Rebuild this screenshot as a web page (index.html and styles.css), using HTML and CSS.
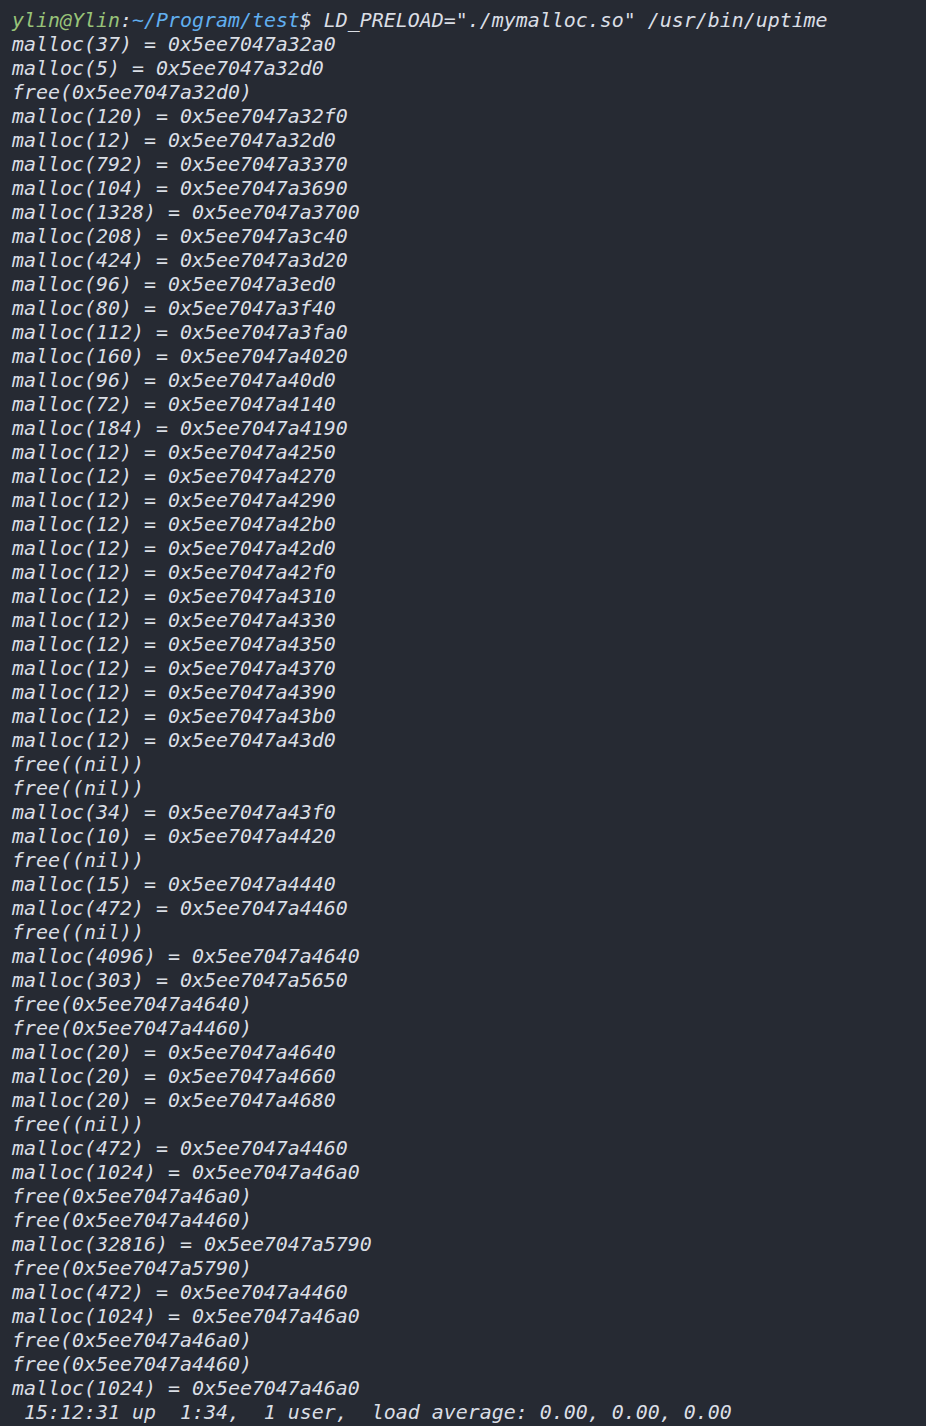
FILE: index.html
```html
<!DOCTYPE html>
<html>
<head>
<meta charset="utf-8">
<link rel="stylesheet" href="styles.css">
</head>
<body>
<pre class="term"><span class="user">ylin@Ylin</span>:<span class="path">~/Program/test</span>$ LD_PRELOAD="./mymalloc.so" /usr/bin/uptime
malloc(37) = 0x5ee7047a32a0
malloc(5) = 0x5ee7047a32d0
free(0x5ee7047a32d0)
malloc(120) = 0x5ee7047a32f0
malloc(12) = 0x5ee7047a32d0
malloc(792) = 0x5ee7047a3370
malloc(104) = 0x5ee7047a3690
malloc(1328) = 0x5ee7047a3700
malloc(208) = 0x5ee7047a3c40
malloc(424) = 0x5ee7047a3d20
malloc(96) = 0x5ee7047a3ed0
malloc(80) = 0x5ee7047a3f40
malloc(112) = 0x5ee7047a3fa0
malloc(160) = 0x5ee7047a4020
malloc(96) = 0x5ee7047a40d0
malloc(72) = 0x5ee7047a4140
malloc(184) = 0x5ee7047a4190
malloc(12) = 0x5ee7047a4250
malloc(12) = 0x5ee7047a4270
malloc(12) = 0x5ee7047a4290
malloc(12) = 0x5ee7047a42b0
malloc(12) = 0x5ee7047a42d0
malloc(12) = 0x5ee7047a42f0
malloc(12) = 0x5ee7047a4310
malloc(12) = 0x5ee7047a4330
malloc(12) = 0x5ee7047a4350
malloc(12) = 0x5ee7047a4370
malloc(12) = 0x5ee7047a4390
malloc(12) = 0x5ee7047a43b0
malloc(12) = 0x5ee7047a43d0
free((nil))
free((nil))
malloc(34) = 0x5ee7047a43f0
malloc(10) = 0x5ee7047a4420
free((nil))
malloc(15) = 0x5ee7047a4440
malloc(472) = 0x5ee7047a4460
free((nil))
malloc(4096) = 0x5ee7047a4640
malloc(303) = 0x5ee7047a5650
free(0x5ee7047a4640)
free(0x5ee7047a4460)
malloc(20) = 0x5ee7047a4640
malloc(20) = 0x5ee7047a4660
malloc(20) = 0x5ee7047a4680
free((nil))
malloc(472) = 0x5ee7047a4460
malloc(1024) = 0x5ee7047a46a0
free(0x5ee7047a46a0)
free(0x5ee7047a4460)
malloc(32816) = 0x5ee7047a5790
free(0x5ee7047a5790)
malloc(472) = 0x5ee7047a4460
malloc(1024) = 0x5ee7047a46a0
free(0x5ee7047a46a0)
free(0x5ee7047a4460)
malloc(1024) = 0x5ee7047a46a0
 15:12:31 up  1:34,  1 user,  load average: 0.00, 0.00, 0.00</pre>
</body>
</html>
```

FILE: styles.css
```css
html, body {
  margin: 0;
  padding: 0;
  background: #262a33;
  height: 100%;
  overflow: hidden;
}

.term {
  margin: 0;
  padding: 9px 0 0 12px;
  font-family: "DejaVu Sans Mono", "Liberation Mono", monospace;
  font-style: italic;
  font-size: 19.93px;
  line-height: 24px;
  color: #dadee5;
  white-space: pre;
}

.user {
  color: #98c379;
}

.path {
  color: #61afef;
}
```
